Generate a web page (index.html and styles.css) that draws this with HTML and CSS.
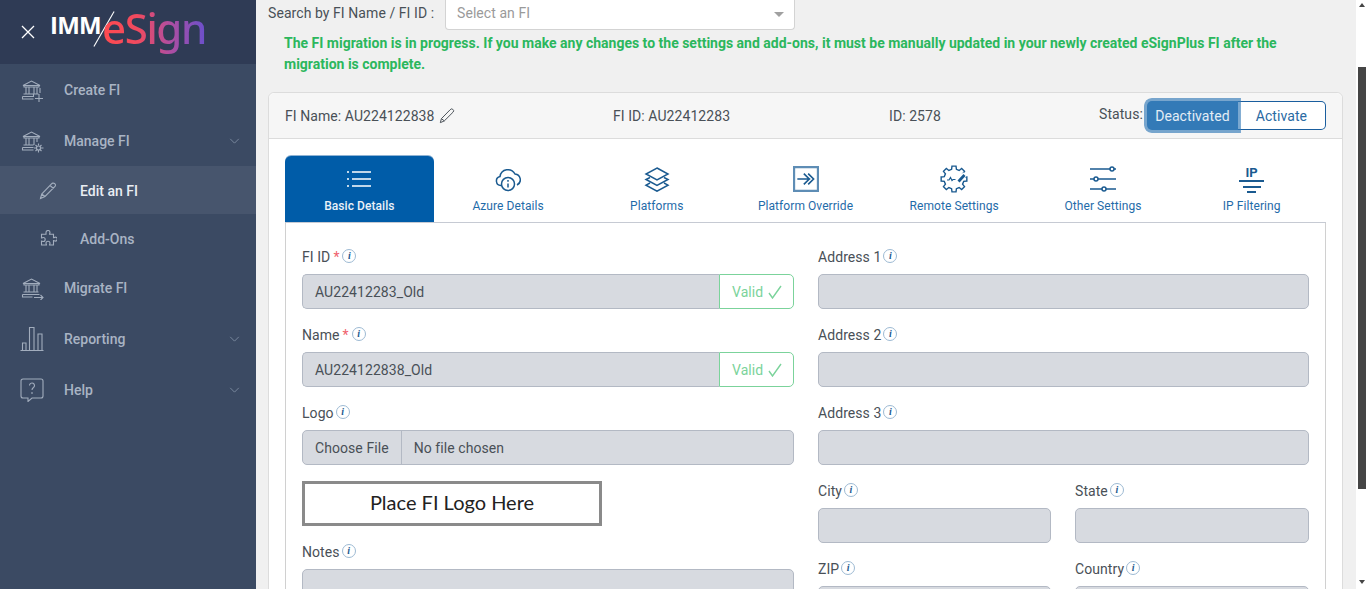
FILE: index.html
```html
<!DOCTYPE html>
<html lang="en">
<head>
<meta charset="utf-8">
<title>Edit an FI</title>
<link rel="stylesheet" href="styles.css">
</head>
<body>
<div class="app">
  <aside class="sidebar">
    <div class="brand">
      <svg class="close" viewBox="0 0 14 14"><path d="M1 1l12 12M13 1L1 13"/></svg>
      <div class="logo">
        <span class="logo-imm">IMM</span>
        <svg class="logo-slash" viewBox="0 0 24 40"><path d="M1 39L23 1"/></svg>
        <span class="logo-esign">eSign</span>
      </div>
    </div>
    <nav>
      <a class="nav-item">
        <svg class="nav-icon" viewBox="0 0 24 24"><path d="M3 7.500L11.500 3 20 7.500zM4 7.500V9h15V7.500M6 9v7M9 9v7M14 9v7M17 9v7M3.500 16h15M2.500 18.500h11V16M2.500 18.500v2.500h11M19 16v8M15 20.500h8M20 10v5"/></svg>
        <span>Create FI</span>
      </a>
      <a class="nav-item">
        <svg class="nav-icon" viewBox="0 0 24 24"><path d="M3 7.500L11.500 3 20 7.500zM4 7.500V9h15V7.500M6 9v7M9 9v7M14 9v7M17 9v4M3.500 16h10M2.500 18.500h11M2.500 18.500v2.500h11"/><circle cx="18.500" cy="19" r="2"/><path d="M18.500 14.500v2M18.500 21v2.500M14 19h2.500M21 19h2.500M15.500 16l1.500 1.500M20 20.500l1.500 1.500M21.500 16L20 17.500M17 20.500L15.500 22"/></svg>
        <span>Manage FI</span>
        <svg class="chev" viewBox="0 0 12 7"><path d="M1 1l5 5 5-5"/></svg>
      </a>
      <a class="nav-item sub active">
        <svg class="sub-icon" viewBox="0 0 18 18"><path d="M1.500 16.500l1.200-4.500L12.500 2a2 2 0 0 1 3.500 2.500L6 14.500zM2.700 12l3.300 2.500M11 3.500l3.500 3"/></svg>
        <span>Edit an FI</span>
      </a>
      <a class="nav-item sub">
        <svg class="sub-icon" viewBox="0 0 18 18"><path d="M7 2.500a2 2 0 0 1 4 0c0 .8-.5 1-.5 1.700h4v3.500c.7 0 1-.6 1.800-.6a2 2 0 0 1 0 4c-.8 0-1.100-.6-1.800-.6v4.500h-4c0-.7.500-1 .5-1.700a2 2 0 0 0-4 0c0 .7.500 1 .5 1.700H2.500v-4c.7 0 1 .5 1.700.5a2 2 0 0 0 0-4c-.7 0-1 .5-1.700.5V4.200h4.500c0-.7 0-1 0-1.700z"/></svg>
        <span>Add-Ons</span>
      </a>
      <a class="nav-item">
        <svg class="nav-icon" viewBox="0 0 24 24"><path d="M3 7.500L11.500 3 20 7.500zM4 7.500V9h15V7.500M6 9v7M9 9v7M14 9v7M17 9v7M3.500 16h15M2.500 18.500h17M2.500 18.500v2.500h10M14 21.500h9M20.500 19l2.500 2.500-2.500 2.500"/></svg>
        <span>Migrate FI</span>
      </a>
      <a class="nav-item">
        <svg class="nav-icon" viewBox="0 0 24 24"><path d="M.5 23.500h23M2.500 23v-7h3.500v7M9.500 23V.5H14v22.500M18 23V7h4v16"/></svg>
        <span>Reporting</span>
        <svg class="chev" viewBox="0 0 12 7"><path d="M1 1l5 5 5-5"/></svg>
      </a>
      <a class="nav-item">
        <svg class="nav-icon" viewBox="0 0 24 24"><path d="M3 1h18a2 2 0 0 1 2 2v15a2 2 0 0 1-2 2h-9l-4 3.500V20H3a2 2 0 0 1-2-2V3a2 2 0 0 1 2-2z"/><path d="M9.500 7.500a2.500 2.500 0 1 1 4 2c-1 .7-1.500 1.200-1.500 2.500M12 14v2"/></svg>
        <span>Help</span>
        <svg class="chev" viewBox="0 0 12 7"><path d="M1 1l5 5 5-5"/></svg>
      </a>
    </nav>
  </aside>

  <main class="main">
    <div class="search-row">
      <span class="search-label">Search by FI Name / FI ID :</span>
      <div class="select">
        <span>Select an FI</span>
        <i class="caret"></i>
      </div>
    </div>
    <p class="notice">The FI migration is in progress. If you make any changes to the settings and add-ons, it must be manually updated in your newly created eSignPlus FI after the migration is complete.</p>

    <section class="card">
      <header class="card-head">
        <div class="head-name">FI Name: AU224122838
          <svg class="pencil" viewBox="0 0 18 18"><path d="M1.500 16.500l1.200-4.500L12.500 2a2 2 0 0 1 3.500 2.500L6 14.500zM2.700 12l3.300 2.500"/></svg>
        </div>
        <div class="head-id">FI ID: AU22412283</div>
        <div class="head-num">ID: 2578</div>
        <div class="head-status">
          <span class="status-label">Status:</span>
          <div class="toggle">
            <span class="toggle-on">Deactivated</span>
            <span class="toggle-off">Activate</span>
          </div>
        </div>
      </header>

      <div class="card-body">
        <div class="tabs">
          <div class="tab active">
            <svg class="tab-icon" viewBox="0 0 26 20"><path d="M1 3h2M6 3h19M1 10h2M6 10h19M1 17h2M6 17h19"/></svg>
            <span>Basic Details</span>
          </div>
          <div class="tab">
            <svg class="tab-icon" viewBox="0 0 26 26"><path d="M6.500 19.500H6a4.500 4.500 0 0 1-1-8.900A8 8 0 0 1 20 8a5.800 5.800 0 0 1 2 11"/><circle cx="13" cy="18" r="6.500"/><path class="thick" d="M13 17.500v4M13 14v1.800"/></svg>
            <span>Azure Details</span>
          </div>
          <div class="tab">
            <svg class="tab-icon" viewBox="0 0 26 26"><path d="M13 2l11 6-11 6L2 8zM6 11.500L2 13.500l11 6 11-6-4-2M6 17l-4 2.200 11 6 11-6-4-2.200"/></svg>
            <span>Platforms</span>
          </div>
          <div class="tab">
            <svg class="tab-icon" viewBox="0 0 24 24"><path class="box" d="M1 1h22v22H1z"/><path d="M4 12h12M10 7l5 5-5 5M14 7l5 5-5 5"/></svg>
            <span>Platform Override</span>
          </div>
          <div class="tab">
            <svg class="tab-icon gear" viewBox="0 0 28 28"><path d="M11.580 4.300L11.970 1.160H16.030L16.420 4.300L19.150 5.430L21.640 3.480L24.520 6.360L22.570 8.850L23.700 11.580L26.840 11.970V16.030L23.700 16.420L22.570 19.150L24.520 21.640L21.640 24.520L19.150 22.570L16.420 23.700L16.030 26.840H11.970L11.580 23.700L8.850 22.570L6.360 24.520L3.480 21.640L5.430 19.150L4.300 16.420L1.160 16.030V11.970L4.300 11.580L5.430 8.850L3.480 6.360L6.360 3.480L8.850 5.430z"/><path class="gear-gap" d="M17 17.500L25 9"/><path class="gear-pen" d="M18.500 16.500L24.500 10"/><path class="gear-sign" d="M7 15h2l1.500-2.500 1.500 3 1-1h2.500"/></svg>
            <span>Remote Settings</span>
          </div>
          <div class="tab">
            <svg class="tab-icon wide" viewBox="0 0 28 26"><path d="M1 3h20M25 3h2M1 13h4M9 13h18M1 23h12M17 23h10"/><circle cx="23" cy="3" r="2"/><circle cx="7" cy="13" r="2"/><circle cx="15" cy="23" r="2"/></svg>
            <span>Other Settings</span>
          </div>
          <div class="tab">
            <div class="ip-icon">
              <span class="ip-text">IP</span>
              <i class="ip-l1"></i><i class="ip-l2"></i><i class="ip-l3"></i>
            </div>
            <span>IP Filtering</span>
          </div>
        </div>

        <div class="panel">
          <div class="col">
            <div class="field">
              <label class="lbl">FI ID <b class="req">*</b><i class="info">i</i></label>
              <div class="group">
                <div class="input grow">AU22412283_Old</div>
                <div class="valid">Valid <svg class="check" viewBox="0 0 14 14"><path d="M1 8l3.500 5L13 1"/></svg></div>
              </div>
            </div>
            <div class="field">
              <label class="lbl">Name <b class="req">*</b><i class="info">i</i></label>
              <div class="group">
                <div class="input grow">AU224122838_Old</div>
                <div class="valid">Valid <svg class="check" viewBox="0 0 14 14"><path d="M1 8l3.500 5L13 1"/></svg></div>
              </div>
            </div>
            <div class="field">
              <label class="lbl">Logo<i class="info">i</i></label>
              <div class="input file">
                <span class="file-btn">Choose File</span>
                <span class="file-name">No file chosen</span>
              </div>
            </div>
            <div class="logo-box">Place FI Logo Here</div>
            <div class="field">
              <label class="lbl">Notes<i class="info">i</i></label>
              <div class="input tall"></div>
            </div>
          </div>

          <div class="col">
            <div class="field">
              <label class="lbl">Address 1<i class="info">i</i></label>
              <div class="input"></div>
            </div>
            <div class="field">
              <label class="lbl">Address 2<i class="info">i</i></label>
              <div class="input"></div>
            </div>
            <div class="field">
              <label class="lbl">Address 3<i class="info">i</i></label>
              <div class="input"></div>
            </div>
            <div class="pair">
              <div class="field">
                <label class="lbl">City<i class="info">i</i></label>
                <div class="input"></div>
              </div>
              <div class="field">
                <label class="lbl">State<i class="info">i</i></label>
                <div class="input"></div>
              </div>
            </div>
            <div class="pair">
              <div class="field">
                <label class="lbl">ZIP<i class="info">i</i></label>
                <div class="input"></div>
              </div>
              <div class="field">
                <label class="lbl">Country<i class="info">i</i></label>
                <div class="input"></div>
              </div>
            </div>
          </div>
        </div>
      </div>
    </section>
  </main>

  <div class="scrollbar">
    <i class="arrow up"></i>
    <i class="thumb"></i>
    <i class="arrow down"></i>
  </div>
</div>
</body>
</html>
```

FILE: styles.css
```css
* { box-sizing: border-box; }
html, body { margin: 0; height: 100%; overflow: hidden; }
body { font-family: Roboto, "Liberation Sans", sans-serif; font-size: 14px; color: #495057; background: #f0f0f0; letter-spacing: .07px; }
.app { display: flex; height: 589px; overflow: hidden; }

/* sidebar */
.sidebar { width: 256px; flex: none; background: #3b4a63; letter-spacing: 0; }
.brand { height: 64px; background: #2f3b55; display: flex; align-items: center; padding-left: 21px; }
.close { width: 14px; height: 14px; fill: none; stroke: #fff; stroke-width: 1.300; flex: none; }
.logo { display: flex; align-items: center; margin-left: 15px; height: 50px; position: relative; width: 160px; }
.logo-imm { font-family: "Open Sans", sans-serif; font-weight: 700; font-size: 24px; color: #fff; letter-spacing: -.8px; position: relative; top: -8px; }
.logo-slash { position: absolute; left: 43px; top: 3px; width: 22px; height: 38px; fill: none; stroke: #fff; stroke-width: 1.200; }
.logo-esign { font-family: "Noto Sans", sans-serif; font-size: 42px; font-weight: 500; letter-spacing: -1.400px; position: absolute; left: 52px; top: -9px;
  background: linear-gradient(90deg, #ff4a4f 0%, #ef4a60 35%, #b04ea0 65%, #6a50cc 100%); -webkit-background-clip: text; background-clip: text; color: transparent; line-height: 60px; height: 60px; }

.nav-item { display: flex; align-items: center; height: 51px; padding-left: 20px; color: #a9b4c4; font-weight: 500; position: relative; }
.nav-item > span { margin-left: 20px; }
.nav-icon { width: 24px; height: 24px; flex: none; fill: none; stroke: #a2adbd; stroke-width: 1.100; }
.chev { position: absolute; left: 229px; top: 23px; width: 11px; height: 6px; fill: none; stroke: #8391a6; stroke-width: 1; }
.nav-item.sub { height: 48px; padding: 2px 0 0 39px; }
.nav-item.sub > span { margin-left: 23px; }
.nav-item.active { background: #47556d; color: #e9edf3; }
.sub-icon { width: 18px; height: 18px; flex: none; fill: none; stroke: #a2adbd; stroke-width: 1.100; }

/* main */
.main { flex: 1; min-width: 0; padding: 0 13px 0 12px; overflow: hidden; }
.search-row { display: flex; align-items: center; height: 30px; }
.search-label { color: #495057; width: 177px; flex: none; padding-bottom: 4px; }
.select { width: 350px; height: 30px; background: #fff; border: 1px solid #d3d3d3; border-top: 0; border-radius: 0 0 4px 4px; display: flex; align-items: center; justify-content: space-between; padding: 0 9px 4px 11px; color: #9a9a9a; }
.caret { width: 0; height: 0; border: 5px solid transparent; border-top: 5px solid #a0a0a0; border-bottom: 0; margin-right: 1px; margin-top: 3px; }
.notice { margin: 3px 0 17px 16px; font-size: 14px; font-weight: 700; line-height: 21px; color: #2bb75d; width: 1000px; letter-spacing: 0; }

.card { background: #fff; border: 1px solid #dcdcdc; border-radius: 6px 6px 0 0; }
.card-head { height: 46px; background: #f6f6f6; border-bottom: 1px solid #dcdcdc; border-radius: 6px 6px 0 0; display: flex; align-items: center; padding: 0 16px; position: relative; }
.head-name { width: 328px; flex: none; display: flex; align-items: center; }
.pencil { width: 16px; height: 16px; margin-left: 4px; fill: none; stroke: #495057; stroke-width: 1.100; }
.head-id { width: 276px; flex: none; }
.head-num { width: 210px; flex: none; }
.head-status { display: flex; align-items: center; }
.status-label { margin-top: -4px; }
.toggle { display: flex; height: 29px; margin-left: 4px; width: 179px; }
.toggle-on { width: 91px; flex: none; position: relative; z-index: 1; background: #337ab7; color: #e3edf5; border-radius: 5px 0 0 5px; display: flex; align-items: center; justify-content: center; box-shadow: 0 0 0 3px rgba(51,122,183,.65); clip-path: inset(-3px -3px -3px -3px round 7px 0 0 7px); }
.toggle-off { flex: 1; background: #fff; color: #2a6aa3; border: 1px solid #1a5e9e; border-left: 0; border-radius: 0 5px 5px 0; display: flex; align-items: center; justify-content: center; }

.card-body { padding: 17px 16px 0; }
.tabs { display: flex; height: 67px; border-bottom: 1px solid #c6cad3; }
.tab { flex: 1 1 0; min-width: 0; height: 66px; display: flex; flex-direction: column; align-items: center; color: #1f6ba9; font-size: 12px; line-height: 14px; padding-top: 10px; }
.tab > span { margin-top: auto; margin-bottom: 9px; }
.tab.active { background: #005ca8; color: #eaf1f8; font-weight: 500; border-radius: 6px 6px 0 0; box-shadow: 0 -1px 0 #8fb3d4; }
.tab-icon { width: 26px; height: 26px; fill: none; stroke: #1a5a90; stroke-width: 1.500; flex: none; }
.tab-icon.gear { width: 28px; height: 28px; margin-top: -1px; stroke-width: 1.400; }
.tab-icon.wide { width: 28px; }
.gear-gap { stroke: #fff; stroke-width: 5; }
.gear-pen { stroke-width: 2.800; }
.gear-sign { stroke-width: 1.200; }
.tab.active .tab-icon { stroke: #fff; stroke-width: 1.300; height: 20px; margin-top: 3px; }
.tab-icon .box { stroke: #5e8db5; stroke-width: 2; }
.ip-icon { width: 26px; height: 28px; display: flex; flex-direction: column; align-items: center; }
.ip-text { color: #1a5a90; font-weight: 700; font-size: 13px; line-height: 14px; height: 15px; }
.ip-icon i { display: block; height: 2px; flex: none; background: #1a5a90; margin-bottom: 3.500px; }
.ip-l1 { width: 25px; }
.ip-l2 { width: 18px; }
.ip-l3 { width: 9px; }

.panel { display: grid; grid-template-columns: 492px 491px; column-gap: 24px; padding: 23px 16px 0; border: solid #d0d0d0; border-width: 0 1px; height: 400px; }
.col { display: flex; flex-direction: column; }
.field { margin-bottom: 15px; }
.lbl { display: flex; align-items: center; height: 22px; margin-bottom: 6px; color: #495057; }
.req { color: #f0616d; font-weight: 400; margin: 0 1px 0 3px; }
.info { width: 14px; height: 14px; border: 1px solid #9dbad3; border-radius: 50%; margin-left: 2px; margin-top: -2px; font: italic 700 10px/12px "Liberation Serif", serif; color: #1d5a8f; text-align: center; }
.input { height: 35px; background: #d7dae0; border: 1px solid #b3b9c4; border-radius: 5px; color: #495057; padding: 0 12px; display: flex; align-items: center; }
.group { display: flex; }
.grow { flex: 1; border-radius: 5px 0 0 5px; border-right: 0; }
.valid { width: 75px; height: 35px; background: #fff; border: 1px solid #7bd39b; border-radius: 0 5px 5px 0; color: #7bd39b; display: flex; align-items: center; padding-left: 12px; }
.check { width: 14px; height: 14px; margin-left: 5px; fill: none; stroke: #7bd39b; stroke-width: 1.400; }
.file { padding: 0; }
.file-btn { height: 33px; padding: 0 12px; border-right: 1px solid #b3b9c4; display: flex; align-items: center; }
.file-name { margin-left: 12px; }
.logo-box { width: 300px; height: 45px; flex: none; margin: 1px 0 15px; padding-bottom: 4px; background: #fff; border: 3px solid #8a8a8a; display: flex; align-items: center; justify-content: center; font-family: Lato, sans-serif; font-size: 20px; color: #222; letter-spacing: 0; }
.tall { height: 80px; }
.pair { display: grid; grid-template-columns: 233px 234px; column-gap: 24px; }

/* scrollbar */
.scrollbar { width: 10px; flex: none; background: #fff; position: relative; }
.thumb { position: absolute; left: 2px; right: 0; top: 67px; height: 422px; background: #454545; }
.arrow { position: absolute; left: 3px; width: 0; height: 0; border: 3.500px solid transparent; }
.arrow.up { top: 3px; border-top: 0; border-bottom: 4px solid #454545; }
.arrow.down { top: 580px; border-bottom: 0; border-top: 4px solid #454545; }
```
